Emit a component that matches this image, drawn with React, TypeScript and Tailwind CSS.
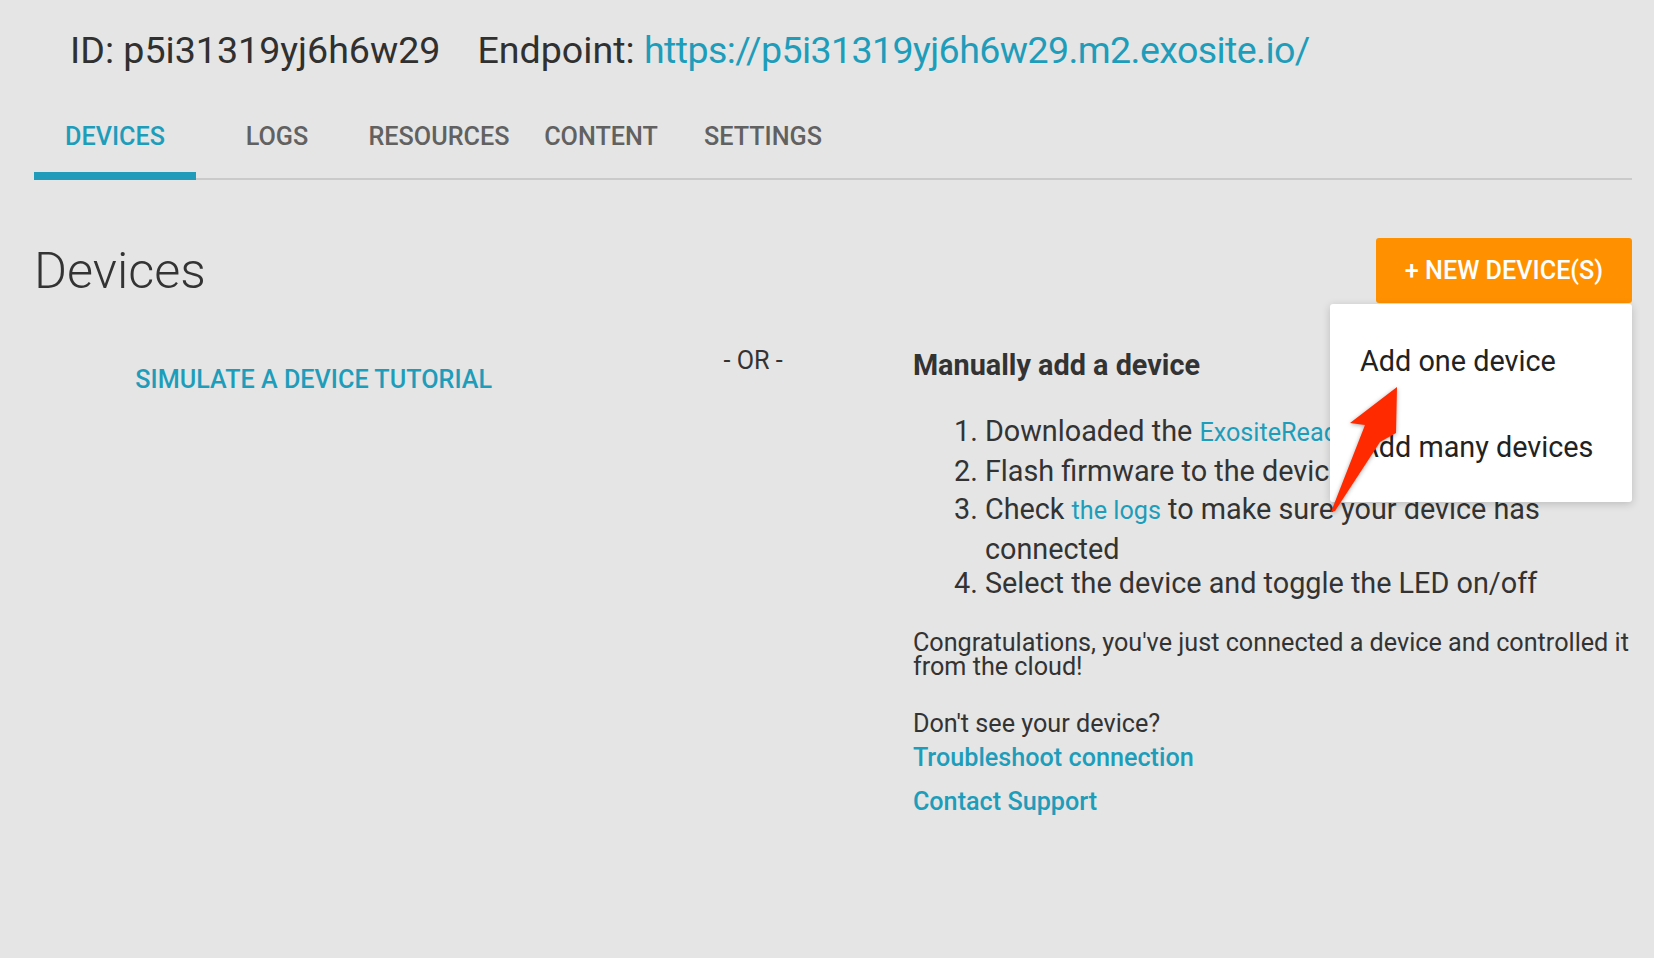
import React from "react";

const tabs = ["DEVICES", "LOGS", "RESOURCES", "CONTENT", "SETTINGS"];

export default function App() {
  return (
    <div className="relative min-h-[958px] w-full bg-[#e5e5e5] font-['Roboto',sans-serif] text-[#303030]">
      {/* Header */}
      <div className="flex gap-[37px] pl-[70px] pt-[28px] text-[37.6px] leading-[44px]">
        <span>ID: p5i31319yj6h6w29</span>
        <span>
          Endpoint:{" "}
          <span className="tracking-[-0.6px] text-[#1e9dbb]">https://p5i31319yj6h6w29.m2.exosite.io/</span>
        </span>
      </div>

      {/* Tabs */}
      <nav className="ml-[34px] mr-[22px] flex border-b-2 border-[#cacaca]">
        {tabs.map((t, i) => (
          <div
            key={t}
            className={`relative flex h-[106px] w-[162px] justify-center pt-[51px] text-[25.2px] font-medium leading-[28px] ${
              i === 0 ? "text-[#1e9dbb]" : "text-[#616161]"
            }`}
          >
            {t}
            {i === 0 && <div className="absolute bottom-[-2px] left-0 right-0 h-[8px] bg-[#209cba]" />}
          </div>
        ))}
      </nav>

      {/* Main */}
      <div className="ml-[34px] mr-[22px]">
        <div className="mt-[58px] flex items-center justify-between">
          <h1 className="text-[50.4px] font-light leading-[50px] text-[#333]">Devices</h1>
          <button className="flex h-[65px] w-[256px] items-center justify-center rounded-[3px] bg-[#ff9100] text-[25.2px] font-medium leading-[28px] text-white">
            + NEW DEVICE(S)
          </button>
        </div>

        <div className="grid grid-cols-[35%_20%_45%]">
          <div className="pt-[63px] text-center">
            <span className="text-[25.2px] font-medium leading-[28px] text-[#1e9dbb]">SIMULATE A DEVICE TUTORIAL</span>
          </div>
          <div className="pt-[44px] text-center text-[25.2px] leading-[28px] text-[#333]">- OR -</div>
          <div className="pt-[45px] text-[#333]">
            <h2 className="text-[28.8px] font-bold leading-[34px] text-[#333]">Manually add a device</h2>
            <ol className="mt-[30px] list-decimal pl-[72px] text-[28.8px] leading-[39px]">
              <li>
                Downloaded the <span className="text-[25.2px] text-[#1e9dbb]">ExositeReady</span>
              </li>
              <li>Flash firmware to the device</li>
              <li className="-mt-[1px]">
                Check <span className="text-[25.2px] text-[#1e9dbb]">the logs</span> to make sure your device has connected
              </li>
              <li className="-mt-[5px]">Select the device and toggle the LED on/off</li>
            </ol>
            <p className="mt-[28px] text-[25.2px] leading-[24px]">
              Congratulations, you've just connected a device and controlled it from the cloud!
            </p>
            <p className="mt-[33px] text-[25.2px] leading-[24px]">Don't see your device?</p>
            <p className="mt-[10px] text-[25.2px] font-medium leading-[24px] text-[#1e9dbb]">Troubleshoot connection</p>
            <p className="mt-[20px] text-[25.2px] font-medium leading-[24px] text-[#1e9dbb]">Contact Support</p>
          </div>
        </div>
      </div>

      {/* Dropdown menu */}
      <div className="absolute right-[22px] top-[304px] flex h-[198px] w-[302px] flex-col gap-[52px] rounded-[3px] bg-white pl-[30px] pt-[40px] text-[28.8px] leading-[34px] text-[#222] shadow-[0_2px_8px_rgba(0,0,0,0.18)]">
        <div>Add one device</div>
        <div>Add many devices</div>
      </div>

      {/* Annotation arrow */}
      <svg
        className="absolute left-[1320px] top-[370px] drop-shadow-[0_1px_2px_rgba(0,0,0,0.35)]"
        width="100"
        height="160"
        viewBox="0 0 100 160"
      >
        <polygon points="77,17 76,63 60,72 15,141 11,142 45,55 30,53" fill="#ff2a00" />
      </svg>
    </div>
  );
}
